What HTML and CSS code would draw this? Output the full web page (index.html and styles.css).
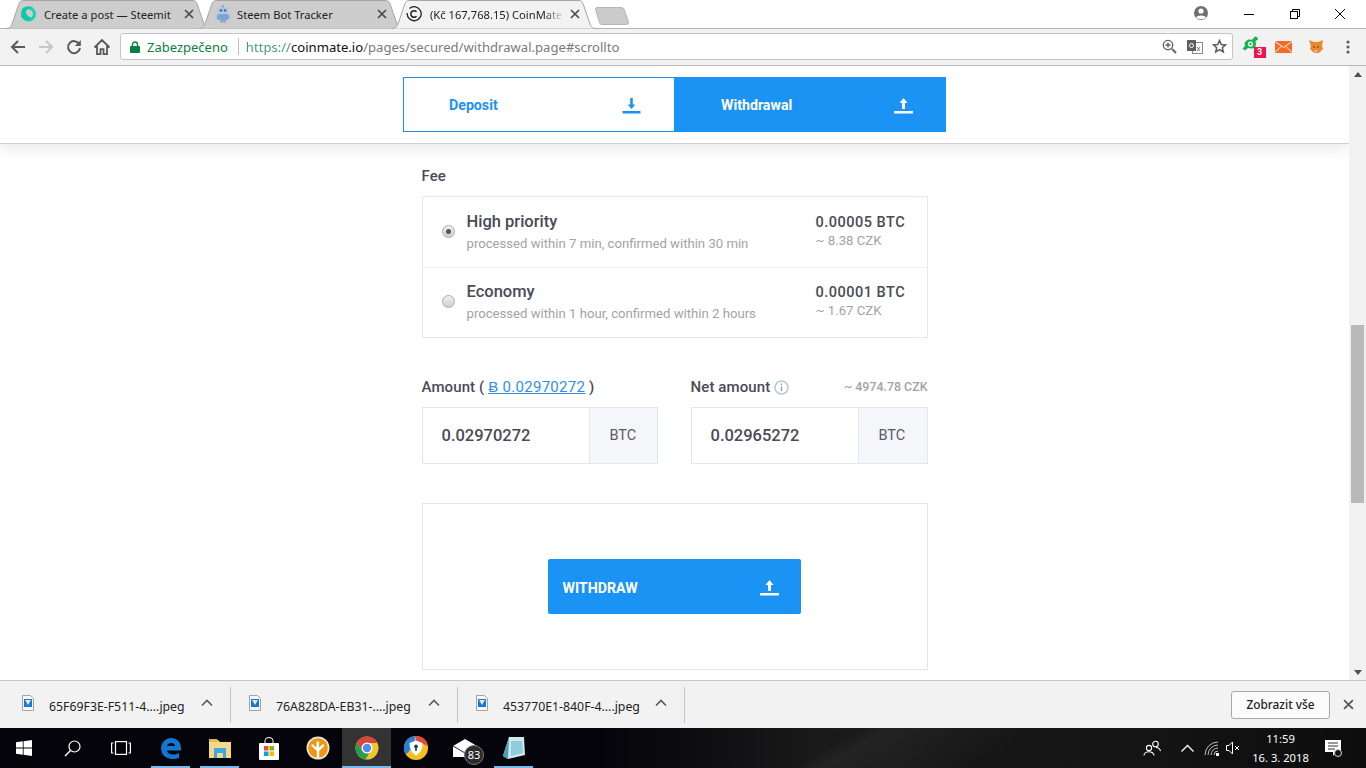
FILE: index.html
```html
<!DOCTYPE html>
<html lang="en">
<head>
<meta charset="utf-8">
<title>CoinMate withdrawal</title>
<link rel="stylesheet" href="styles.css">
</head>
<body>
<svg class="defs" width="0" height="0" aria-hidden="true">
  <symbol id="ic-up" viewBox="0 0 19 18"><path d="M9.5 2 5.5 7H8v6h3V7h2.500z"/><rect y="15" width="19" height="2.500"/></symbol>
  <symbol id="ic-down" viewBox="0 0 19 18"><path d="M9.500 13 5.700 8.500H8.200V2h2.600v6.500h2.500z"/><rect x="0.500" y="15" width="18" height="2.500"/></symbol>
  <symbol id="ic-x" viewBox="0 0 10 10"><path d="M1 1l8 8M9 1L1 9" fill="none" stroke="currentColor" stroke-width="1.700"/></symbol>
  <symbol id="ic-caret" viewBox="0 0 12 8"><path d="M1 6.500l5-5 5 5" fill="none" stroke="currentColor" stroke-width="1.600"/></symbol>
  <symbol id="ic-file" viewBox="0 0 12 16"><path d="M.5.500h8l3 3v12H.500z" fill="#f4f6f8" stroke="#9aa5ad"/><rect x="2" y="4" width="8" height="8" fill="#1a78d0"/><path d="M3 5h6L6 10z" fill="#d8ecfa"/></symbol>
  <symbol id="ic-tab" viewBox="0 0 204 29"><path d="M0 28.500C4 28.500 5 26 6 24L13 3.500C14 1.500 15 .500 18 .500H186C189 .500 190 1.500 191 3.500L198 24C199 26 200 28.500 204 28.500"/></symbol>
</svg>

<header class="chrome">
  <div class="tabstrip">
    <div class="tab">
      <svg class="tab-shape" aria-hidden="true"><use href="#ic-tab"/></svg>
      <svg class="tab-icon" viewBox="0 0 16 16"><circle cx="8.500" cy="8" r="6" fill="none" stroke="#14d6b0" stroke-width="3"/><path d="M2 3C5 0 11 0 13 2 9 2 6 3 6 6 6 9 9 11 12 12 9 15 3 15 1 10z" fill="#10c8a4"/></svg>
      <span class="tab-title">Create a post — Steemit</span>
      <svg class="tab-close"><use href="#ic-x"/></svg>
    </div>
    <div class="tab">
      <svg class="tab-shape" aria-hidden="true"><use href="#ic-tab"/></svg>
      <svg class="tab-icon tab-icon-wide" viewBox="0 0 18 18"><rect x="8.300" y="0" width="1.400" height="3" fill="#7d9cc4"/><rect x="4" y="2.500" width="10" height="6" rx="2.500" fill="#a9c4e4"/><circle cx="7" cy="5.500" r="1.200" fill="#2e6fb4"/><circle cx="11" cy="5.500" r="1.200" fill="#2e6fb4"/><rect x="3" y="9" width="12" height="6" rx="2" fill="#7aa6d8"/><rect x="1" y="9.500" width="2" height="4" fill="#b7c6d8"/><rect x="15" y="9.500" width="2" height="4" fill="#b7c6d8"/><rect x="6" y="15" width="6" height="2.500" fill="#98a9bd"/></svg>
      <span class="tab-title">Steem Bot Tracker</span>
      <svg class="tab-close"><use href="#ic-x"/></svg>
    </div>
    <div class="tab tab-active">
      <svg class="tab-shape" aria-hidden="true"><use href="#ic-tab"/></svg>
      <svg class="tab-icon" viewBox="0 0 16 16" fill="none" stroke="#222"><path d="M3.500 2.500A7 7 0 1 1 1.200 7" stroke-width="1.300"/><path d="M10.500 5.700A3.300 3.300 0 1 0 10.500 10.300" stroke-width="1.500"/></svg>
      <span class="tab-title tab-title-fade">(Kč 167,768.15) CoinMate</span>
      <svg class="tab-close"><use href="#ic-x"/></svg>
    </div>
    <svg class="newtab" viewBox="0 0 34 18" aria-hidden="true"><path d="M2 .500H26Q28 .500 29 2L33.500 15Q34 17.500 31 17.500H7Q5 17.500 4.500 15.500L.500 2.500Q.200 .500 2 .500Z" fill="#cbcbcb" stroke="#b4b4b4"/></svg>
    <div class="window-controls">
      <svg class="avatar" viewBox="0 0 18 18"><circle cx="9" cy="9" r="7" fill="#6f6f6f"/><circle cx="9" cy="7" r="2.600" fill="#fff"/><path d="M4 13.500C5 10.800 13 10.800 14 13.500 12 15.800 6 15.800 4 13.500z" fill="#fff"/></svg>
      <div class="caption"><svg width="12" height="12" viewBox="0 0 12 12"><path d="M1 6.500h10" stroke="#000"/></svg></div>
      <div class="caption"><svg width="12" height="12" viewBox="0 0 12 12" fill="none" stroke="#000"><rect x="1.500" y="3.500" width="7" height="7"/><path d="M3.500 3.500v-2h7v7h-2"/></svg></div>
      <div class="caption"><svg width="12" height="12" viewBox="0 0 12 12"><path d="M1 1l10 10M11 1L1 11" stroke="#000" fill="none"/></svg></div>
    </div>
  </div>

  <div class="toolbar">
    <div class="nav-btn"><svg width="16" height="16" viewBox="0 0 16 16" fill="none" stroke="#5a5a5a" stroke-width="2"><path d="M15 8H2M8 2 2 8l6 6"/></svg></div>
    <div class="nav-btn"><svg width="16" height="16" viewBox="0 0 16 16" fill="none" stroke="#c6c6c6" stroke-width="2"><path d="M1 8h13M8 2l6 6-6 6"/></svg></div>
    <div class="nav-btn"><svg width="16" height="16" viewBox="0 0 16 16"><path d="M13.200 5A6 6 0 1 0 14 9" fill="none" stroke="#5a5a5a" stroke-width="2"/><path d="M14.800 1v6h-6z" fill="#5a5a5a"/></svg></div>
    <div class="nav-btn"><svg width="18" height="18" viewBox="0 0 18 18" fill="none" stroke="#5a5a5a" stroke-width="1.800"><path d="M1.500 9.500 9 2l7.500 7.500M4 8v8.200h3.500v-5h3v5H14V8"/></svg></div>
    <div class="omnibox">
      <svg class="lock" viewBox="0 0 10 12"><path d="M2.500 5V3.500a2.500 2.500 0 0 1 5 0V5" fill="none" stroke="#0b8043" stroke-width="1.400"/><rect y="5" width="10" height="7" rx="1" fill="#0b8043"/></svg>
      <span class="secure">Zabezpečeno</span>
      <span class="omni-sep"></span>
      <span class="url"><span class="url-scheme">https://</span><span class="url-host">coinmate.io</span>/pages/secured/withdrawal.page#scrollto</span>
      <div class="omni-actions">
        <div class="omni-btn"><svg width="15" height="15" viewBox="0 0 15 15" fill="none" stroke="#5f5f5f" stroke-width="1.300"><circle cx="6" cy="6" r="4.700"/><path d="M10 10l4 4" stroke-width="2"/><path d="M6 3.500v5M3.500 6h5"/></svg></div>
        <div class="omni-btn"><svg width="16" height="16" viewBox="0 0 16 16"><rect x="5.500" y="3.500" width="10" height="11" fill="#fff" stroke="#8a8a8a"/><rect y="1" width="9" height="11" fill="#5f5f5f"/><circle cx="4.500" cy="6.500" r="2" fill="none" stroke="#fff"/><path d="M10 8l3 4M13 8l-3 4" stroke="#777"/></svg></div>
        <div class="omni-btn"><svg width="15" height="15" viewBox="0 0 15 15"><path d="M7.500 1.500l1.800 4 4.200.4-3.200 2.800 1 4.300-3.800-2.300-3.800 2.300 1-4.300L1.500 5.900l4.200-.4z" fill="none" stroke="#5a5a5a" stroke-width="1.500"/></svg></div>
      </div>
    </div>
    <div class="ext-btn ext-badged">
      <svg width="17" height="15" viewBox="0 0 17 15"><path d="M13 .500c2 0 3.500 1.500 2.800 3.200L13.500 5 14 8.500C14 11 12 12.500 9.500 12.500L6 12 3 14.500 .500 12.500 3 10 2.500 6.500 6 3.500 10 3.800z" fill="#18b252"/><circle cx="8.500" cy="8" r="2.600" fill="#fff"/><circle cx="8.500" cy="8" r="1.200" fill="#18b252"/></svg>
      <span class="ext-count">3</span>
    </div>
    <div class="ext-btn"><svg width="17" height="12" viewBox="0 0 17 12"><rect width="17" height="12" fill="#f56a24"/><path d="M0 .500l8.500 6 8.500-6M0 11.500l6-6M17 11.500l-6-6" fill="none" stroke="#fff" stroke-width="1"/></svg></div>
    <div class="ext-btn"><svg width="14" height="13" viewBox="0 0 14 13"><path d="M0 0l5 2h4l5-2-1 6 1 3-3 3-1.500 1h-3L4 12 1 9l1-3z" fill="#e88a2c"/><path d="M4 6l2 1-1 1zM10 6L8 7l1 1z" fill="#3a2a20"/><path d="M5.500 10h3L8 12H6z" fill="#d8c8b8"/></svg></div>
    <div class="ext-btn"><svg width="4" height="14" viewBox="0 0 4 14" fill="#5f5f5f"><circle cx="2" cy="2" r="1.600"/><circle cx="2" cy="7" r="1.600"/><circle cx="2" cy="12" r="1.600"/></svg></div>
  </div>
</header>

<div class="viewport">
  <main class="page">
    <div class="stickybar">
      <nav class="switch">
        <a class="switch-item">
          <span>Deposit</span>
          <svg class="switch-icon"><use href="#ic-down"/></svg>
        </a>
        <a class="switch-item switch-item-on">
          <span>Withdrawal</span>
          <svg class="switch-icon"><use href="#ic-up"/></svg>
        </a>
      </nav>
    </div>

    <section class="form">
      <h2 class="label label-fee">Fee</h2>
      <div class="fee-box">
        <div class="fee-row">
          <span class="radio radio-on"></span>
          <div class="fee-main">
            <div class="fee-title">High priority</div>
            <div class="fee-sub">processed within 7 min, confirmed within 30 min</div>
          </div>
          <div class="fee-price">
            <div class="fee-btc">0.00005 BTC</div>
            <div class="fee-czk">~ 8.38 CZK</div>
          </div>
        </div>
        <div class="fee-row">
          <span class="radio"></span>
          <div class="fee-main">
            <div class="fee-title">Economy</div>
            <div class="fee-sub">processed within 1 hour, confirmed within 2 hours</div>
          </div>
          <div class="fee-price">
            <div class="fee-btc">0.00001 BTC</div>
            <div class="fee-czk">~ 1.67 CZK</div>
          </div>
        </div>
      </div>

      <div class="amounts">
        <div class="amount-col">
          <div class="label">Amount ( <a class="amount-link">Ƀ 0.02970272</a> )</div>
          <div class="field">
            <div class="field-value">0.02970272</div>
            <div class="field-unit field-unit-narrow">BTC</div>
          </div>
        </div>
        <div class="amount-col">
          <div class="label label-split">
            <span class="label-with-info">Net amount
              <svg class="info" viewBox="0 0 15 15"><circle cx="7.500" cy="7.500" r="6.500" fill="none" stroke="#b9c6d6" stroke-width="1.500"/><path d="M7.500 6.500v4.500M7.500 3.500v1.700" stroke="#9aa3ad" stroke-width="1.500"/></svg>
            </span>
            <span class="net-czk">~ 4974.78 CZK</span>
          </div>
          <div class="field">
            <div class="field-value">0.02965272</div>
            <div class="field-unit">BTC</div>
          </div>
        </div>
      </div>

      <div class="submit-box">
        <button class="submit" type="button">
          <span class="submit-text">WITHDRAW</span>
          <svg class="switch-icon"><use href="#ic-up"/></svg>
        </button>
      </div>
    </section>
  </main>
  <aside class="scrollbar">
    <svg class="sb-arrow" width="8" height="5" viewBox="0 0 8 5"><path d="M4 0l4 5H0z" fill="#505050"/></svg>
    <div class="sb-thumb"></div>
    <svg class="sb-arrow sb-arrow-end" width="8" height="5" viewBox="0 0 8 5"><path d="M0 0h8L4 5z" fill="#505050"/></svg>
  </aside>
</div>

<section class="downloads">
  <div class="dl-item dl-first">
    <svg class="dl-icon"><use href="#ic-file"/></svg>
    <span class="dl-name">65F69F3E-F511-4....jpeg</span>
    <svg class="dl-caret"><use href="#ic-caret"/></svg>
  </div>
  <div class="dl-item">
    <svg class="dl-icon"><use href="#ic-file"/></svg>
    <span class="dl-name">76A828DA-EB31-....jpeg</span>
    <svg class="dl-caret"><use href="#ic-caret"/></svg>
  </div>
  <div class="dl-item">
    <svg class="dl-icon"><use href="#ic-file"/></svg>
    <span class="dl-name">453770E1-840F-4....jpeg</span>
    <svg class="dl-caret"><use href="#ic-caret"/></svg>
  </div>
  <button class="dl-all" type="button">Zobrazit vše</button>
  <svg class="dl-close"><use href="#ic-x"/></svg>
</section>

<footer class="taskbar">
  <div class="tb-btn tb-w48"><svg width="16" height="16" viewBox="0 0 16 16" fill="#fff"><path d="M0 2.300 6.800 1.300V7.600H0zM7.600 1.200 16 0V7.600H7.600zM0 8.400H6.800V14.700L0 13.700zM7.600 8.400H16V16L7.600 14.800z"/></svg></div>
  <div class="tb-btn tb-w48"><svg width="17" height="17" viewBox="0 0 17 17" fill="none" stroke="#fff" stroke-width="1.200"><circle cx="10.500" cy="6.500" r="5.500"/><path d="M6.500 10.500 1 16" stroke-width="1.500"/></svg></div>
  <div class="tb-btn tb-w49"><svg width="20" height="14" viewBox="0 0 20 14" fill="none" stroke="#fff" stroke-width="1.200"><rect x="4.500" y=".600" width="11" height="12.800"/><path d="M2.500 2H.600v10h1.900M17.500 2h1.900v10h-1.900"/></svg></div>
  <div class="tb-btn tb-app tb-open"><svg width="21" height="21" viewBox="0 0 21 21"><path d="M1 11C1 4 6 0 11 0c6 0 10 4 10 11v1.500H7c.500 4 6 5.500 12 2.500v5c-8 3-17 0-18-9zM7 8h8c0-4-7-4-8 0z" fill="#0f78d4"/></svg></div>
  <div class="tb-btn tb-app tb-open"><svg width="22" height="20" viewBox="0 0 22 20"><path d="M0 2h9l2 2h11v16H0z" fill="#f3d98a"/><path d="M0 1h8l1 3H0z" fill="#e0b94f"/><path d="M5 10h12v10h-3v-5H8v5H5z" fill="#3fa8e0"/></svg></div>
  <div class="tb-btn tb-app"><svg width="20" height="23" viewBox="0 0 20 23"><path d="M6 6V3.500a4 3 0 0 1 8 0V6" fill="none" stroke="#fff"/><rect y="6" width="20" height="17" rx="1" fill="#fff"/><rect x="5" y="9" width="4.500" height="4.500" fill="#f25022"/><rect x="10.500" y="9" width="4.500" height="4.500" fill="#7fba00"/><rect x="5" y="14.500" width="4.500" height="4.500" fill="#00a4ef"/><rect x="10.500" y="14.500" width="4.500" height="4.500" fill="#ffb900"/></svg></div>
  <div class="tb-btn tb-app"><svg width="24" height="24" viewBox="0 0 24 24"><circle cx="12" cy="12" r="11.500" fill="#e9e3d6"/><circle cx="12" cy="12" r="9.800" fill="#f0950f"/><path d="M10.800 22V15L5 9.500l1.500-1.500 4 3.500V5.500h2.600v6l4-3.500 1.500 1.500L13.200 15v7z" fill="#fff"/></svg></div>
  <div class="tb-btn tb-app tb-active"><svg width="24" height="24" viewBox="0 0 24 24"><circle cx="12" cy="12" r="11.500" fill="#f0c52d"/><path d="M12 .500A11.500 11.500 0 0 0 2 6.200L6.800 14.500 12 7H22.500A11.500 11.500 0 0 0 12 .500z" fill="#d9443a"/><path d="M2 6.200A11.500 11.500 0 0 0 10.500 23.400L14.500 16.500 6.800 14.500z" fill="#269d52"/><circle cx="12" cy="12" r="5.500" fill="#fff"/><circle cx="12" cy="12" r="4.200" fill="#4f8bef"/></svg></div>
  <div class="tb-btn tb-app"><svg width="24" height="24" viewBox="0 0 24 24"><circle cx="12" cy="12" r="12" fill="#f4c020"/><path d="M12 0A12 12 0 0 0 2 18.500L8 12z" fill="#2a7de1"/><path d="M12 0C18 0 23 4 24 10L12 5z" fill="#e5483a"/><path d="M12 4.500 18.500 7C18.500 13 16.500 17 12 19.500 7.500 17 5.500 13 5.500 7z" fill="#fff"/><circle cx="12" cy="10.500" r="1.900" fill="#1f3f6f"/><rect x="11.200" y="11" width="1.600" height="4" fill="#1f3f6f"/></svg></div>
  <div class="tb-btn tb-app tb-mail">
    <svg width="24" height="18" viewBox="0 0 24 18"><path d="M0 7 12 0l12 7v11H0z" fill="#fff"/><path d="M0 7l12 7 12-7" fill="none" stroke="#222"/></svg>
    <span class="tb-badge">83</span>
  </div>
  <div class="tb-btn tb-app tb-open"><svg width="22" height="24" viewBox="0 0 22 24"><path d="M6 1h15l1 18-17 4L0 20z" fill="#cfe8ec"/><path d="M6 1 0 20l5 3z" fill="#49a1b3"/><path d="M8 5h11l1 12-12 3z" fill="#90cddb"/></svg></div>

  <div class="tray">
    <svg class="tray-icon" width="18" height="16" viewBox="0 0 18 16" fill="none" stroke="#fff" stroke-width="1.100"><circle cx="6" cy="8" r="2.600"/><path d="M1 15.500c0-5 10-5 10 0"/><circle cx="12.500" cy="4" r="2.800"/><path d="M13 7.500c2 0 4 1.500 4.500 3.500"/></svg>
    <svg class="tray-icon tray-caret" width="13" height="8" viewBox="0 0 13 8" fill="none" stroke="#fff" stroke-width="1.300"><path d="M.5 7.500l6-6 6 6"/></svg>
    <svg class="tray-icon tray-wifi" width="16" height="15" viewBox="0 0 16 15" fill="none" stroke="#bdbdbd"><path d="M1 14A13 13 0 0 1 14 1M4 14A10 10 0 0 1 14 4M7 14A7 7 0 0 1 14 7M10 14A4 4 0 0 1 14 10"/><rect x="12" y="12" width="3" height="3" fill="#fff" stroke="none"/></svg>
    <svg class="tray-icon tray-vol" width="15" height="14" viewBox="0 0 15 14" fill="none" stroke="#fff"><path d="M.5 4.500h2.500L6.500 1v12L3 9.500H.5z"/><path d="M9 5l4 4M13 5l-4 4"/></svg>
    <div class="clock"><div>11:59</div><div>16. 3. 2018</div></div>
    <svg class="tray-icon tray-note" width="17" height="17" viewBox="0 0 17 17"><path d="M0 0h16v12h-5l-3 4v-4H0z" fill="#fff"/><path d="M3 3h10M3 6h10M3 9h7" stroke="#333"/><circle cx="13" cy="13" r="3.500" fill="#111" stroke="#ddd"/></svg>
  </div>
</footer>
</body>
</html>
```
FILE: styles.css
```css
* { box-sizing: border-box; }
html, body { margin: 0; padding: 0; }
body {
  width: 1366px;
  height: 768px;
  overflow: hidden;
  display: flex;
  flex-direction: column;
  background: #fff;
  font-family: Roboto, "Liberation Sans", sans-serif;
  color: #4a4a57;
}
.defs { position: absolute; }

/* Browser chrome */
.chrome { flex: none; font-family: "Noto Sans", "Open Sans", sans-serif; }
.tabstrip {
  height: 29px;
  display: flex;
  align-items: flex-start;
  padding-left: 6px;
  background: #fff;
  border-bottom: 1px solid #b4b4b4;
}
.tab {
  position: relative;
  z-index: 0;
  flex: none;
  width: 204px;
  height: 29px;
  margin-right: -11px;
  padding: 0 16px 1px 14px;
  display: flex;
  align-items: center;
  font-size: 11.200px;
  color: #222;
}
.tab-shape {
  position: absolute;
  left: 0;
  top: 0;
  width: 204px;
  height: 29px;
  z-index: -1;
  fill: #cdcdcd;
  stroke: #a6a6a6;
}
.tab-active { z-index: 1; }
.tab-active .tab-shape { fill: #f2f2f2; }
.tab-icon { flex: none; width: 16px; height: 16px; margin-right: 8px; }
.tab-icon-wide { width: 18px; height: 18px; margin: 0 5px 0 1px; }
.tab-title { flex: 1; min-width: 0; white-space: nowrap; overflow: hidden; }
.tab-title-fade {
  -webkit-mask-image: linear-gradient(to right, #000 85%, transparent 100%);
  mask-image: linear-gradient(to right, #000 85%, transparent 100%);
}
.tab-close { flex: none; width: 10px; height: 10px; color: #4a4a4a; margin-left: 6px; }
.newtab { flex: none; width: 34px; height: 18px; margin: 7px 0 0 10px; }
.window-controls { margin-left: auto; height: 28px; display: flex; align-items: center; padding-right: 3px; }
.avatar { width: 18px; height: 18px; margin: -2px 17px 0 0; }
.caption { width: 45.500px; height: 28px; display: flex; align-items: center; justify-content: center; }

.toolbar {
  height: 37px;
  padding: 0 0 1px 4px;
  display: flex;
  align-items: center;
  background: #f2f2f2;
  border-bottom: 1px solid #b9b9b9;
}
.nav-btn { flex: none; width: 28px; display: flex; justify-content: center; }
.omnibox {
  flex: none;
  width: 1113px;
  height: 27px;
  margin-left: 4px;
  padding-left: 9px;
  display: flex;
  align-items: center;
  background: #fff;
  border: 1px solid #c4c4c4;
  border-radius: 3px;
  font-size: 13px;
  white-space: nowrap;
}
.lock { width: 10px; height: 12px; flex: none; margin-right: 7px; }
.secure { color: #0b8043; }
.omni-sep { width: 1px; height: 17px; background: #bdbdbd; margin: 0 7px 0 10px; }
.url { color: #7a7a7a; font-size: 13.100px; }
.url-scheme { color: #0b8043; opacity: .75; }
.url-host { color: #111; }
.omni-actions { margin-left: auto; display: flex; }
.omni-btn { width: 25px; display: flex; justify-content: center; }
.ext-btn { position: relative; flex: none; width: 32.500px; display: flex; justify-content: center; }
.omnibox + .ext-btn { margin-left: 1.500px; }
.ext-badged svg { margin-top: -6px; }
.ext-count {
  position: absolute;
  left: 19px;
  top: 5px;
  width: 12px;
  height: 11px;
  background: #f0134d;
  color: #fff;
  font: 700 9px/11px Roboto, sans-serif;
  text-align: center;
}

/* Page */
.viewport { flex: 1; min-height: 0; display: flex; }
.page { flex: 1; min-width: 0; overflow: hidden; background: #fff; }
.stickybar {
  height: 78px;
  padding-top: 11px;
  border-bottom: 1px solid #cfcfcf;
  box-shadow: 0 4px 14px rgba(0, 0, 0, .1);
  position: relative;
}
.switch { width: 543px; height: 55px; margin: 0 auto; display: flex; }
.switch-item {
  flex: 1;
  height: 55px;
  display: flex;
  align-items: center;
  justify-content: space-between;
  padding: 0 33px 0 45px;
  border: 1px solid #1c8ee8;
  border-right: 0;
  color: #1b93f5;
  fill: #1b93f5;
  font-size: 14.200px;
  font-weight: 700;
}
.switch-item-on { padding: 0 33px 0 47px; background: #1b93f5; border: 0; color: #fff; fill: #fff; }
.switch-icon { width: 19px; height: 18px; flex: none; }

.form { width: 506px; margin: 0 auto; padding-top: 22px; }
.label { margin: 0; font-size: 15px; font-weight: 500; line-height: 20px; letter-spacing: .1px; color: #4a4a57; }
.label-fee { margin-bottom: 10px; }
.fee-box { height: 142px; border: 1px solid #e3e8ee; }
.fee-row {
  height: 70px;
  padding: 0 22px 0 19px;
  display: flex;
  align-items: center;
}
.fee-row + .fee-row { border-top: 1px solid #f1f3f6; }
.radio {
  flex: none;
  width: 13px;
  height: 13px;
  margin: -2px 12px 0 0;
  border: 1px solid #ababab;
  border-radius: 50%;
  background: linear-gradient(#f0f0f0, #cfcfcf);
  display: flex;
  align-items: center;
  justify-content: center;
}
.radio-on::after { content: ""; width: 5px; height: 5px; border-radius: 50%; background: #555; }
.fee-main { flex: 1; }
.fee-title { font-size: 16.500px; font-weight: 500; line-height: 22px; color: #4a4a57; }
.fee-sub { font-size: 13.150px; line-height: 20px; margin-top: 1px; color: #a3a3a3; }
.fee-price { flex: none; width: 89px; margin-top: -3px; white-space: nowrap; }
.fee-btc { font-size: 14.500px; font-weight: 500; line-height: 20px; color: #4a4a57; letter-spacing: .5px; }
.fee-czk { font-size: 13.200px; line-height: 16px; margin-top: 0; color: #a3a3a3; }

.amounts { margin-top: 39px; display: grid; grid-template-columns: 236px 237px; column-gap: 33px; }
.amount-link { color: #2f8fe8; text-decoration: underline; font-weight: 400; letter-spacing: .3px; }
.label-split { display: flex; justify-content: space-between; align-items: center; }
.label-with-info { display: flex; align-items: center; gap: 4px; }
.info { width: 15px; height: 15px; }
.net-czk { font-size: 12.400px; font-weight: 500; letter-spacing: 0; color: #a3a3a3; }
.field { margin-top: 10px; height: 57px; display: flex; border: 1px solid #e3e6ef; }
.field-value { flex: 1; padding-left: 19px; font-size: 16.500px; font-weight: 500; line-height: 55px; color: #4a4a57; }
.field-unit {
  flex: none;
  width: 69px;
  padding-left: 20px;
  background: #f5f6fa;
  border-left: 1px solid #e3e6ef;
  font-size: 14.500px;
  line-height: 56px;
  color: #5a5a68;
}
.field-unit-narrow { width: 68px; }
.submit-box {
  margin-top: 39px;
  height: 167px;
  border: 1px solid #e3e6ea;
  display: flex;
  align-items: center;
  justify-content: center;
}
.submit {
  width: 253px;
  height: 55px;
  padding: 0 14px 0 15px;
  display: flex;
  align-items: center;
  justify-content: space-between;
  margin-right: 1px;
  background: #1b93f5;
  border: 0;
  border-radius: 2px;
  color: #fff;
  fill: #fff;
  font: 700 14.200px Roboto, sans-serif;
}
.submit-text { padding-top: 3px; }
.submit .switch-icon { margin-right: 8px; }

.scrollbar {
  flex: none;
  width: 17px;
  padding: 6px 0 5px;
  background: #f1f1f1;
  display: flex;
  flex-direction: column;
  align-items: center;
}
.sb-arrow { flex: none; }
.sb-thumb { width: 13px; height: 178px; margin-top: 248px; background: #b9b9b9; }
.sb-arrow-end { margin-top: auto; }

/* Downloads */
.downloads {
  flex: none;
  height: 48px;
  display: flex;
  align-items: center;
  background: #f2f2f2;
  border-top: 1px solid #c8c8c8;
  font-family: "Noto Sans", "Open Sans", sans-serif;
  font-size: 12.300px;
  color: #222;
}
.dl-item {
  flex: none;
  width: 227px;
  height: 36px;
  display: flex;
  align-items: center;
  border-right: 1px solid #c4c4c4;
  padding-left: 18px;
}
.dl-first { width: 231px; padding-left: 22px; }
.dl-icon { width: 12px; height: 16px; flex: none; margin: -4px 15px 0 0; }
.dl-name { flex: none; width: 152px; white-space: nowrap; padding-top: 3px; }
.dl-caret { width: 12px; height: 8px; color: #5a5a5a; margin: -4px 0 0 0; }
.dl-all {
  margin-left: auto;
  width: 99px;
  height: 28px;
  padding: 0 0 1px;
  background: #fbfbfb;
  border: 1px solid #a8a8a8;
  border-radius: 3px;
  color: #222;
  font: 500 11.800px "Noto Sans", "Open Sans", sans-serif;
}
.dl-close { width: 11px; height: 11px; margin: 0 12px 0 13px; color: #5a5a5a; }

/* Taskbar */
.taskbar {
  flex: none;
  height: 40px;
  display: flex;
  align-items: stretch;
  color: #fff;
  background:
    linear-gradient(150deg, transparent 60%, rgba(70, 70, 70, .22) 62%, transparent 72%),
    linear-gradient(90deg, #04040a 0, #04040a 44%, #1a1a1a 60%, #141414 84%, #0d0d0d 100%);
  font-family: "Noto Sans", "Open Sans", sans-serif;
}
.tb-btn { flex: none; display: flex; align-items: center; justify-content: center; position: relative; }
.tb-w48 { width: 48px; }
.tb-w49 { width: 50px; }
.tb-app { width: 49px; }
.tb-open::after {
  content: "";
  position: absolute;
  left: 5px;
  right: 5px;
  bottom: 0;
  height: 2px;
  background: #76b9ed;
}
.tb-active { background: #333; }
.tb-active::after {
  content: "";
  position: absolute;
  left: 0;
  right: 0;
  bottom: 0;
  height: 2px;
  background: #76b9ed;
}
.tb-badge {
  position: absolute;
  left: 24px;
  top: 17px;
  width: 20px;
  height: 20px;
  border-radius: 50%;
  background: #2b2b2b;
  border: 1px solid #777;
  font-size: 11px;
  line-height: 18px;
  text-align: center;
}
.tray { margin-left: auto; display: flex; align-items: center; padding-right: 24px; }
.tray-icon { flex: none; }
.tray-caret { margin-left: 19.500px; }
.tray-wifi { margin-left: 10.500px; }
.tray-vol { margin-left: 5.500px; }
.clock { width: 76px; margin-left: 2px; font-size: 11.200px; line-height: 19px; text-align: center; color: #fff; }
.tray-note { margin-left: 6.500px; }
```
